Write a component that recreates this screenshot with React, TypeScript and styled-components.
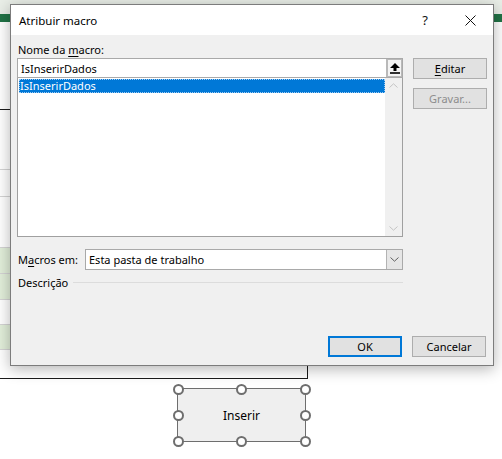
import React from 'react';
import styled, { createGlobalStyle } from 'styled-components';

const GlobalStyle = createGlobalStyle`
    html, body {
        margin: 0;
        padding: 0;
        background: #ffffff;
    }
    body {
        font-family: "Segoe UI", "Noto Sans", "Liberation Sans", sans-serif;
        font-size: 11px;
        color: #000;
    }
`;

const Page = styled.div`
    position: relative;
    width: 502px;
    height: 459px;
    overflow: hidden;
    background: #ffffff;
`;

/* excel window behind the dialog */
const Ribbon = styled.div`
    height: 14px;
    background: #e9eee7;
    border-bottom: 8px solid #217346;
`;

const Sheet = styled.div`
    display: flex;
    flex-direction: column;
    padding-top: 87px;
`;

const Table = styled.div`
    width: 307px;
    border-top: 1px solid #1a1a1a;
    border-right: 1px solid #1a1a1a;
    border-bottom: 1px solid #1a1a1a;
    display: flex;
    flex-direction: column;
`;

const Row = styled.div<{ $h: number; $fill?: boolean }>`
    height: ${p => p.$h}px;
    background: ${p => (p.$fill ? '#e2efda' : '#ffffff')};
    border-bottom: 1px solid #d4d4d4;
    &:last-child {
        border-bottom: none;
    }
`;

/* dialog */
const Dialog = styled.div`
    position: absolute;
    left: 10px;
    top: 4px;
    width: 484px;
    height: 362px;
    box-sizing: border-box;
    border: 1px solid #7c7c7c;
    background: #f0f0f0;
    box-shadow: 0 3px 14px rgba(0, 0, 0, 0.3);
    display: flex;
    flex-direction: column;
`;

const TitleBar = styled.div`
    height: 30px;
    background: #ffffff;
    display: flex;
    align-items: center;
    padding-left: 8px;
`;

const Title = styled.div`
    flex: 1;
    font-size: 11.5px;
`;

const TitleButton = styled.div<{ $w: number }>`
    width: ${p => p.$w}px;
    height: 30px;
    display: flex;
    align-items: center;
    justify-content: center;
    font-size: 13px;
    color: #111;
`;

const Body = styled.div`
    flex: 1;
    display: flex;
    flex-direction: column;
    padding: 7px 7px 8px 6px;
`;

const Columns = styled.div`
    display: grid;
    grid-template-columns: 386px 74px;
    column-gap: 10px;
`;

const LeftCol = styled.div`
    display: flex;
    flex-direction: column;
`;

const RightCol = styled.div`
    display: flex;
    flex-direction: column;
    gap: 9px;
    padding-top: 16px;
`;

const Label = styled.div`
    height: 16px;
    line-height: 16px;
    padding-left: 1px;
`;

const Key = styled.span`
    text-decoration: underline;
    text-underline-offset: 2px;
`;

const NameBox = styled.div`
    height: 20px;
    box-sizing: border-box;
    border: 1px solid #a9a9a9;
    background: #ffffff;
    display: flex;
    align-items: center;
`;

const NameText = styled.div`
    flex: 1;
    padding-left: 3px;
`;

const RefButton = styled.div`
    width: 16px;
    height: 18px;
    box-sizing: border-box;
    border: 1px solid #b9b9b9;
    border-left-width: 2px;
    background: #f4f4f4;
    display: flex;
    align-items: center;
    justify-content: center;
`;

const List = styled.div`
    height: 159px;
    box-sizing: border-box;
    border: 1px solid #a0a0a0;
    border-top: none;
    background: #ffffff;
    display: flex;
`;

const ListItems = styled.div`
    flex: 1;
    padding: 1px 0 0 1px;
`;

const ListItem = styled.div<{ $selected?: boolean }>`
    height: 14px;
    line-height: 13px;
    box-sizing: border-box;
    padding-left: 1px;
    background: ${p => (p.$selected ? '#0078d7' : 'transparent')};
    color: ${p => (p.$selected ? '#ffffff' : '#000000')};
    outline: ${p => (p.$selected ? '1px dotted #9ccaf2' : 'none')};
    outline-offset: -1px;
`;

const ScrollBar = styled.div`
    width: 17px;
    background: #f0f0f0;
    display: flex;
    flex-direction: column;
    justify-content: space-between;
    align-items: center;
    padding: 5px 0 5px;
`;

const MacrosRow = styled.div`
    display: flex;
    align-items: center;
    margin-top: 12px;
`;

const MacrosLabel = styled.div`
    width: 67px;
    padding-left: 1px;
`;

const Combo = styled.div`
    flex: 1;
    height: 21px;
    box-sizing: border-box;
    border: 1px solid #a9a9a9;
    background: #ffffff;
    display: flex;
    align-items: center;
`;

const ComboText = styled.div`
    flex: 1;
    padding-left: 3px;
`;

const DropButton = styled.div`
    width: 16px;
    height: 19px;
    box-sizing: border-box;
    border-left: 1px solid #b3b3b3;
    background: #e6e6e6;
    display: flex;
    align-items: center;
    justify-content: center;
`;

const GroupTitle = styled.div`
    display: flex;
    align-items: center;
    gap: 5px;
    margin-top: 4px;
    height: 16px;
    padding-left: 1px;

    &::after {
        content: '';
        flex: 1;
        height: 1px;
        background: #dcdcdc;
    }
`;

const Footer = styled.div`
    margin-top: auto;
    display: flex;
    justify-content: flex-end;
    gap: 10px;
`;

const Button = styled.div<{ $default?: boolean; $disabled?: boolean }>`
    width: 74px;
    height: 21px;
    box-sizing: border-box;
    border: ${p => (p.$default ? '2px solid #0078d7' : '1px solid #adadad')};
    background: #e1e1e1;
    color: ${p => (p.$disabled ? '#8d8d8d' : '#000000')};
    display: flex;
    align-items: center;
    justify-content: center;
`;

/* form button on the sheet, with its selection handles */
const Shape = styled.div`
    position: absolute;
    left: 177px;
    top: 388px;
    width: 129px;
    height: 54px;
    box-sizing: border-box;
    border: 1.5px solid #6e6e6e;
    background: #efefef;
    display: flex;
    align-items: center;
    justify-content: center;
    font-size: 12px;
`;

const Handle = styled.div<{ $x: number; $y: number }>`
    position: absolute;
    left: ${p => p.$x}%;
    top: ${p => p.$y}%;
    width: 11px;
    height: 11px;
    margin: -5.5px 0 0 -5.5px;
    box-sizing: border-box;
    border: 2px solid #6e6e6e;
    border-radius: 50%;
    background: #ffffff;
`;

const handles = [
    [0, 0], [50, 0], [100, 0],
    [0, 50], [100, 50],
    [0, 100], [50, 100], [100, 100],
];

const sheetRows = [
    { h: 59 }, { h: 26 }, { h: 50 },
    { h: 25, fill: true }, { h: 25, fill: true },
    { h: 24 }, { h: 24, fill: true }, { h: 28 },
];

const Chevron = ({ up, color }: { up?: boolean; color: string }) => (
    <svg width="9" height="5" viewBox="0 0 9 5">
        <polyline
            points={up ? '0.5,4.5 4.5,0.8 8.5,4.5' : '0.5,0.5 4.5,4.2 8.5,0.5'}
            fill="none"
            stroke={color}
            strokeWidth="1"
        />
    </svg>
);

const App = () => {
    return (
        <Page>
            <GlobalStyle />
            <Ribbon />
            <Sheet>
                <Table>
                    {sheetRows.map((r, i) => (
                        <Row key={i} $h={r.h} $fill={r.fill} />
                    ))}
                </Table>
            </Sheet>

            <Dialog>
                <TitleBar>
                    <Title>Atribuir macro</Title>
                    <TitleButton $w={44}>?</TitleButton>
                    <TitleButton $w={46}>
                        <svg width="11" height="11" viewBox="0 0 11 11">
                            <path d="M0.5 0.5 L10.5 10.5 M10.5 0.5 L0.5 10.5" stroke="#111" strokeWidth="1" />
                        </svg>
                    </TitleButton>
                </TitleBar>

                <Body>
                    <Columns>
                        <LeftCol>
                            <Label>Nome da <Key>m</Key>acro:</Label>
                            <NameBox>
                                <NameText>IsInserirDados</NameText>
                                <RefButton>
                                    <svg width="10" height="11" viewBox="0 0 10 11">
                                        <polygon points="5,0 10,5 6.5,5 6.5,8 3.5,8 3.5,5 0,5" fill="#000" />
                                        <rect x="0" y="9.2" width="10" height="1.6" fill="#000" />
                                    </svg>
                                </RefButton>
                            </NameBox>
                            <List>
                                <ListItems>
                                    <ListItem $selected>IsInserirDados</ListItem>
                                </ListItems>
                                <ScrollBar>
                                    <Chevron up color="#c4c4c4" />
                                    <Chevron color="#c4c4c4" />
                                </ScrollBar>
                            </List>
                            <MacrosRow>
                                <MacrosLabel>M<Key>a</Key>cros em:</MacrosLabel>
                                <Combo>
                                    <ComboText>Esta pasta de trabalho</ComboText>
                                    <DropButton>
                                        <Chevron color="#606060" />
                                    </DropButton>
                                </Combo>
                            </MacrosRow>
                            <GroupTitle>Descrição</GroupTitle>
                        </LeftCol>
                        <RightCol>
                            <Button><span><Key>E</Key>ditar</span></Button>
                            <Button $disabled>Gravar...</Button>
                        </RightCol>
                    </Columns>
                    <Footer>
                        <Button $default>OK</Button>
                        <Button>Cancelar</Button>
                    </Footer>
                </Body>
            </Dialog>

            <Shape>
                Inserir
                {handles.map(([x, y], i) => (
                    <Handle key={i} $x={x} $y={y} />
                ))}
            </Shape>
        </Page>
    );
};

export default App;
